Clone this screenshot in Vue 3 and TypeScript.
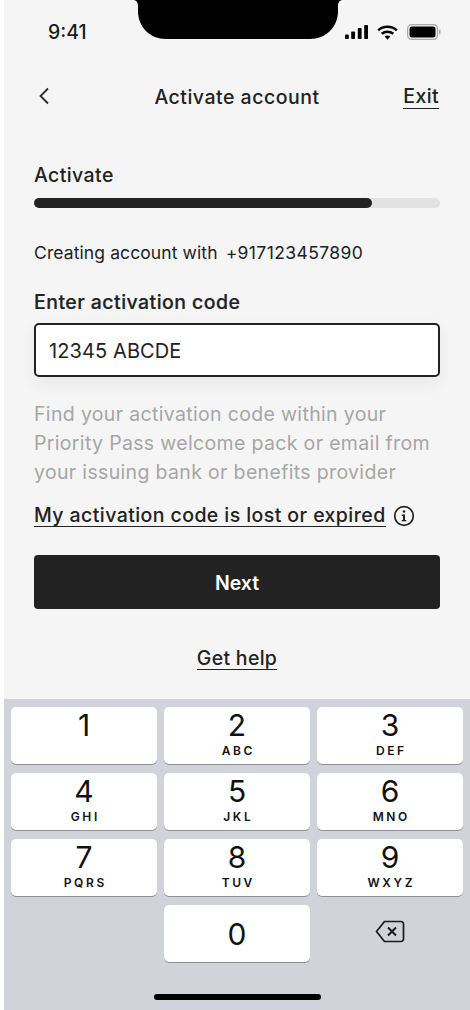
<script setup lang="ts">
const keys: { d: string; l: string }[] = [
  { d: '1', l: '' }, { d: '2', l: 'ABC' }, { d: '3', l: 'DEF' },
  { d: '4', l: 'GHI' }, { d: '5', l: 'JKL' }, { d: '6', l: 'MNO' },
  { d: '7', l: 'PQRS' }, { d: '8', l: 'TUV' }, { d: '9', l: 'WXYZ' },
]
</script>

<template>
  <div class="page">
    <div class="screen">
      <div class="main">
        <div class="status">
          <span class="time">9:41</span>
          <svg class="notch" width="210" height="39" viewBox="0 0 210 39"><path d="M0 0h210c-3 0-5 2-5 6v5c0 16-12 28-28 28H33C17 39 5 27 5 11V6C5 2 3 0 0 0z"/></svg>
          <div class="status-icons">
            <svg width="23" height="14" viewBox="0 0 23 14"><rect x="0" y="9.500" width="3.800" height="4.500" rx="0.800"/><rect x="6.200" y="6.500" width="3.800" height="7.500" rx="0.800"/><rect x="12.800" y="3" width="3.800" height="11" rx="0.800"/><rect x="19.200" y="0" width="3.800" height="14" rx="0.800"/></svg>
            <svg width="21" height="15" viewBox="0 0 21 15"><path d="M1.200 5.300C6.300.6 14.700.6 19.800 5.300" fill="none" stroke="#000" stroke-width="2.500"/><path d="M4.700 8.800c3.400-2.900 8.200-2.900 11.600 0" fill="none" stroke="#000" stroke-width="2.500"/><path d="M7.600 11.400c1.700-1.300 4.100-1.300 5.800 0l-2.900 3.300z"/></svg>
            <svg width="34" height="16" viewBox="0 0 34 16"><rect x="0.600" y="0.600" width="29.800" height="14.800" rx="4" fill="none" stroke="#a9a9a9" stroke-width="1.200"/><rect x="2.500" y="2.500" width="26" height="11" rx="2.500"/><rect x="32" y="5.500" width="1.500" height="5" rx="0.700" fill="#aaa"/></svg>
          </div>
        </div>

        <div class="nav">
          <svg class="back" width="12" height="18" viewBox="0 0 12 18"><path d="M10 1.500 2.500 9l7.500 7.500" fill="none" stroke="#2b2b2b" stroke-width="1.800"/></svg>
          <span class="title">Activate account</span>
          <a class="exit">Exit</a>
        </div>

        <div class="content">
          <div class="step">Activate</div>
          <div class="track"><div class="fill"></div></div>
          <div class="creating"><span>Creating account with</span><span class="phone">+917123457890</span></div>
          <div class="label">Enter activation code</div>
          <div class="input">12345 ABCDE</div>
          <p class="hint">Find your activation code within your<br />Priority Pass welcome pack or email from<br />your issuing bank or benefits provider</p>
          <div class="lost">
            <a class="lost-link">My activation code is lost or expired</a>
            <svg width="22" height="22" viewBox="0 0 22 22"><circle cx="11" cy="11" r="9.300" fill="none" stroke="#222" stroke-width="1.700"/><rect x="10" y="9.500" width="2" height="6.500" fill="#222"/><rect x="8.700" y="9.500" width="2" height="1.500" fill="#222"/><rect x="8.700" y="15" width="4.600" height="1.300" fill="#222"/><circle cx="11" cy="6.500" r="1.300" fill="#222"/></svg>
          </div>
          <button class="next">Next</button>
          <a class="help">Get help</a>
        </div>
      </div>

      <div class="keyboard">
        <div class="keys">
          <div v-for="k in keys" :key="k.d" class="key">
            <span class="digit">{{ k.d }}</span>
            <span v-if="k.l" class="letters">{{ k.l }}</span>
          </div>
          <div class="blank"></div>
          <div class="key zero"><span class="digit">0</span></div>
          <div class="del">
            <svg width="30" height="24" viewBox="0 0 30 24"><path d="M9.500 1.500h16.500a2.500 2.500 0 0 1 2.500 2.500v15a2.500 2.500 0 0 1-2.500 2.500H9.500L1.500 11.500z" fill="none" stroke="#1a1a1a" stroke-width="1.700" stroke-linejoin="round"/><path d="M13 7.500l8 8M21 7.500l-8 8" fill="none" stroke="#1a1a1a" stroke-width="2"/></svg>
          </div>
        </div>
        <div class="home"></div>
      </div>
    </div>
  </div>
</template>

<style>
html, body { margin: 0; background: #fff; }
</style>

<style scoped>
.page {
  width: 470px;
  height: 1010px;
  padding-left: 4px;
  box-sizing: border-box;
  background: #fff;
  font-family: Inter, "Liberation Sans", sans-serif;
  color: #222;
  overflow: hidden;
}
.screen {
  height: 100%;
  display: flex;
  flex-direction: column;
  background: #f5f5f5;
}
.main { height: 699px; flex: none; display: flex; flex-direction: column; }
.status {
  height: 39px;
  display: flex;
  justify-content: space-between;
  padding: 0 29px 0 44px;
  position: relative;
}
.time { font-size: 19.500px; font-weight: 500; line-height: 20px; margin-top: 22px; color: #1c1c1c; }
.notch { position: absolute; left: 129px; top: 0; }
.status-icons { display: flex; align-items: center; gap: 9px; margin-top: 24px; height: 16px; }
.status-icons svg { display: block; }
.nav {
  height: 22px;
  margin-top: 47px;
  padding: 0 31px 0 30px;
  display: flex;
  align-items: center;
  justify-content: space-between;
  position: relative;
}
.back { margin-top: -3px; margin-left: 4px; }
.title {
  position: absolute;
  left: 0;
  right: 0;
  text-align: center;
  font-size: 19.500px;
  letter-spacing: 0.500px;
  font-weight: 500;
  line-height: 22px;
}
.exit { font-size: 19.500px; font-weight: 500; line-height: 22px; border-bottom: 1.500px solid #222; padding-bottom: 1px; letter-spacing: 0.400px; }
.content { padding: 0 30px; display: flex; flex-direction: column; }
.step { margin-top: 56px; font-size: 19.500px; letter-spacing: 0.400px; font-weight: 500; line-height: 22px; }
.track { margin-top: 12px; height: 10px; border-radius: 5px; background: #e2e2e2; }
.fill { width: 338px; height: 10px; border-radius: 5px; background: #222; }
.creating { margin-top: 35px; font-size: 17.500px; line-height: 20px; display: flex; gap: 8px; letter-spacing: 0.100px; }
.phone { letter-spacing: 0.400px; }
.label { margin-top: 28px; font-size: 19.500px; letter-spacing: 0.450px; font-weight: 500; line-height: 22px; -webkit-text-stroke: 0.200px #222; }
.input {
  margin-top: 10px;
  height: 54px;
  box-sizing: border-box;
  border: 2px solid #222;
  border-radius: 5px;
  background: #fff;
  box-shadow: 0 6px 18px rgba(0, 0, 0, 0.06);
  padding: 2px 0 0 13px;
  display: flex;
  align-items: center;
  font-size: 20px;
  letter-spacing: 0.100px;
  color: #222;
}
.hint { margin: 23px 0 0; font-size: 19.500px; letter-spacing: 0.340px; line-height: 29px; color: #a6a6a6; white-space: nowrap; }
.lost { margin-top: 14px; height: 29px; display: flex; align-items: center; gap: 7px; }
.lost-link { font-size: 19.500px; letter-spacing: 0.420px; font-weight: 500; line-height: 22px; border-bottom: 1.500px solid #222; }
.next {
  margin-top: 25px;
  height: 54px;
  border: 0;
  border-radius: 4px;
  background: #222;
  color: #fff;
  font-family: inherit;
  font-size: 19.500px;
  font-weight: 600;
  padding: 2px 0 0;
}
.help {
  margin-top: 38px;
  align-self: center;
  font-size: 19.500px;
  letter-spacing: 0.300px;
  font-weight: 500;
  line-height: 22px;
  border-bottom: 1.500px solid #222;
}
.keyboard { flex: 1; background: #d1d3da; position: relative; padding: 8px 7px 0; }
.keys { display: grid; grid-template-columns: repeat(3, 146px); grid-auto-rows: 57px; column-gap: 7px; row-gap: 9px; }
.key {
  background: #fff;
  border-radius: 5px;
  box-shadow: 0 1px 0 #8f9196;
  display: flex;
  flex-direction: column;
  align-items: center;
  color: #111;
}
.digit { font-size: 30px; line-height: 36px; font-weight: 400; }
.letters { font-size: 12px; font-weight: 600; letter-spacing: 2.600px; line-height: 13px; margin: 1px -2.600px 0 0; }
.zero { justify-content: center; }
.del { display: flex; justify-content: center; padding-top: 15px; margin-left: -1px; }
.home {
  position: absolute;
  left: 150px;
  bottom: 10px;
  width: 167px;
  height: 6px;
  border-radius: 3px;
  background: #000;
}
</style>
